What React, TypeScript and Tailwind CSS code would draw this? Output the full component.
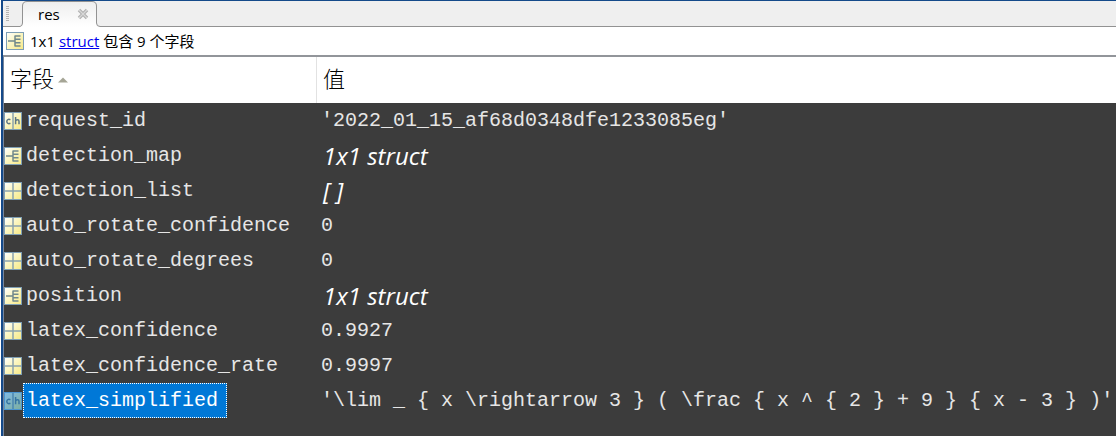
import React from "react";

type Kind = "char" | "struct" | "matrix";
type Field = { name: string; value: string; kind: Kind; special?: boolean };

const fields: Field[] = [
  { name: "request_id", value: "'2022_01_15_af68d0348dfe1233085eg'", kind: "char" },
  { name: "detection_map", value: "1x1 struct", kind: "struct", special: true },
  { name: "detection_list", value: "[ ]", kind: "matrix", special: true },
  { name: "auto_rotate_confidence", value: "0", kind: "matrix" },
  { name: "auto_rotate_degrees", value: "0", kind: "matrix" },
  { name: "position", value: "1x1 struct", kind: "struct", special: true },
  { name: "latex_confidence", value: "0.9927", kind: "matrix" },
  { name: "latex_confidence_rate", value: "0.9997", kind: "matrix" },
  {
    name: "latex_simplified",
    value: "'\\lim _ { x \\rightarrow 3 } ( \\frac { x ^ { 2 } + 9 } { x - 3 } )'",
    kind: "char",
  },
];

function TypeIcon({ kind, selected = false }: { kind: Kind; selected?: boolean }) {
  const line = selected ? "#4a86b0" : "#8ba3ad";
  return (
    <svg viewBox="0 0 18 18" className="h-[18px] w-[18px] shrink-0" aria-hidden="true">
      <defs>
        <linearGradient id={`fill-${kind}-${selected}`} x1="0" y1="0" x2="1" y2="1">
          <stop offset="0" stopColor={selected ? "#7fb9e6" : "#ffffff"} />
          <stop offset="0.45" stopColor={selected ? "#80b5c4" : "#fbf6c4"} />
          <stop offset="1" stopColor={selected ? "#7cae9f" : "#f7e984"} />
        </linearGradient>
      </defs>
      <rect x="0.5" y="0.5" width="17" height="17" fill={`url(#fill-${kind}-${selected})`} stroke={selected ? "#4a94cf" : "#7f9fb5"} />
      {kind === "matrix" && <path d="M9 1v16M1 9h16" stroke={line} strokeWidth="1.5" />}
      {kind === "struct" && (
        <path d="M2 9h7M9 3.5v11M9 4h5.5M9 7.3h5.5M9 10.7h5.5M9 14h5.5" stroke="#71898c" strokeWidth="1.5" fill="none" />
      )}
      {kind === "char" && (
        <g fill="none" stroke={selected ? "#3675a3" : "#5f7884"} strokeWidth="1.5">
          <path d="M9 1v16" stroke={line} />
          <path d="M6.4 7.7C4.5 6.8 2.8 7.6 2.8 9.5s1.700 2.700 3.600 1.800" />
          <path d="M11.6 5v7.200M11.6 9c.8-1.700 3.400-1.800 3.400.3v2.900" />
        </g>
      )}
    </svg>
  );
}

export default function App() {
  return (
    <div className="flex min-h-screen w-full pl-px font-['Open_Sans','Noto_Sans_CJK_SC',sans-serif] text-black">
      <div className="w-[2px] shrink-0 bg-[#154a8a]" />
      <main className="flex min-w-0 flex-1 flex-col border-t border-t-[#154a8a] bg-white">
        <header className="flex h-[26px] items-stretch bg-[#efefef]">
          <div className="w-[17px] shrink-0 border-b border-[#929292] pt-[5px] pl-[3px]">
            <svg viewBox="0 0 3 15" className="h-[15px] w-[3px]" aria-hidden="true">
              <path d="M0 .5h3M0 2.500h3M0 4.500h3M0 6.500h3M0 8.500h3M0 10.500h3M0 12.500h3M0 14.500h3" stroke="#b4b4b4" />
            </svg>
          </div>
          <div className="relative flex w-20 shrink-0 items-center pl-[18px]">
            <svg viewBox="0 0 80 26" className="absolute inset-0 h-full w-full" aria-hidden="true">
              <defs>
                <linearGradient id="tab" x2="0" y2="1">
                  <stop stopColor="#eeeeee" />
                  <stop offset="1" stopColor="#ffffff" />
                </linearGradient>
              </defs>
              <path d="M0 26v-.5Q2.500 25 2.500 22V5Q2.500.5 7 .5h65Q76.500.5 76.500 5v17Q76.500 25.500 80 25.500V26z" fill="url(#tab)" />
              <path d="M0 25.500Q2.500 25 2.500 22V5Q2.500.5 7 .5h65Q76.500.5 76.500 5v17Q76.500 25.500 80 25.500" fill="none" stroke="#929292" />
            </svg>
            <button className="relative text-[15px] leading-5">res</button>
            <button aria-label="Close res" className="relative ml-4">
              <svg viewBox="0 0 14 12" className="h-3 w-3.5" aria-hidden="true">
                <path d="m3 2 8 8m0-8-8 8" stroke="#b2b2b2" strokeWidth="3.500" />
                <path d="m3 2 8 8m0-8-8 8" stroke="#d8d8d8" strokeWidth="1.200" />
              </svg>
            </button>
          </div>
          <div className="flex-1 border-b border-[#929292]" />
        </header>
        <div className="flex h-7 items-center gap-1.5 pl-[3px] text-[15px]">
          <TypeIcon kind="struct" />
          <p className="whitespace-nowrap">
            1x1 <a href="#struct" className="text-[#0000ee] underline">struct</a> 包含 9 个字段
          </p>
        </div>
        <div className="flex-1 border-t-2 border-l border-t-[#92959a] border-l-[#77869b] bg-[#3c3c3c]">
          <table className="w-full table-fixed border-separate border-spacing-0 text-left">
            <colgroup>
              <col className="w-[313px]" />
              <col />
            </colgroup>
            <thead className="bg-white text-[22px] leading-6">
              <tr className="h-[46px]">
                <th className="border-r border-[#e2e2e2] p-0 pb-1 pl-1.5 font-light">
                  <span className="flex items-center gap-1">
                    字段
                    <svg viewBox="0 0 10 6" className="mt-1 h-[6px] w-[10px]" aria-hidden="true">
                      <path d="M0 5.500 5 .5l5 5z" fill="#a5a596" />
                    </svg>
                  </span>
                </th>
                <th className="p-0 pb-1 pl-1.5 font-light">值</th>
              </tr>
            </thead>
            <tbody className="font-['Liberation_Mono',monospace] text-xl leading-6 text-[#e6e6e6]">
              {fields.map((field) => {
                const selected = field.name === "latex_simplified";
                return (
                  <tr key={field.name} className="h-[35px]">
                    <td className="p-0">
                      <div className="flex h-[35px] items-center gap-px">
                        <TypeIcon kind={field.kind} selected={selected} />
                        <span
                          className={
                            selected
                              ? "flex h-[35px] items-center border border-dotted border-white bg-[#0078d7] pr-2 pl-[2px] text-white"
                              : "pl-[3px]"
                          }
                        >
                          {field.name}
                        </span>
                      </div>
                    </td>
                    <td
                      className={
                        field.special
                          ? "p-0 pl-1.5 font-['Open_Sans',sans-serif] text-2xl leading-8 font-medium whitespace-pre text-white italic"
                          : "p-0 pl-1 whitespace-pre"
                      }
                    >
                      {field.value}
                    </td>
                  </tr>
                );
              })}
            </tbody>
          </table>
        </div>
      </main>
    </div>
  );
}
